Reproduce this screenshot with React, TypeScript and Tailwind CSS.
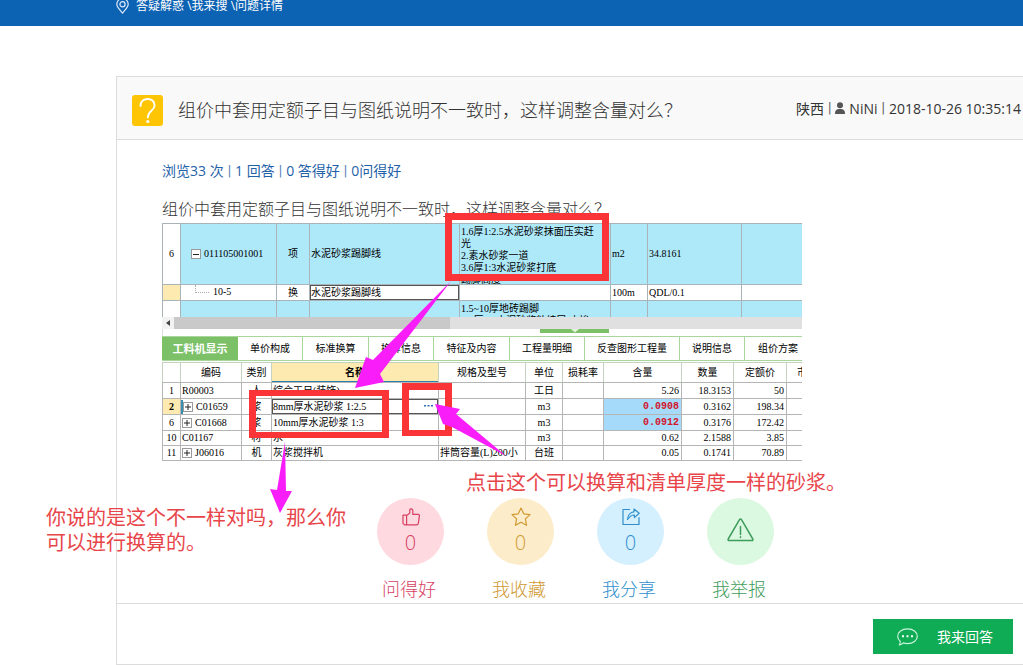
import clsx from "clsx";
import type { ReactNode } from "react";

const tabs = [
  { label: "单价构成", width: "w-[65px]" },
  { label: "标准换算", width: "w-[66px]" },
  { label: "换算信息", width: "w-[65px]" },
  { label: "特征及内容", width: "w-[76px]" },
  { label: "工程量明细", width: "w-[75px]" },
  { label: "反查图形工程量", width: "w-[95px]" },
  { label: "说明信息", width: "w-[65px]" },
];

interface Material {
  no: number;
  code: string;
  expandable?: boolean;
  kind: string;
  name: string;
  spec?: string;
  unit: string;
  content: string;
  amount: string;
  price: string;
  changed?: boolean;
  selected?: boolean;
}

const materials: Material[] = [
  { no: 1, code: "R00003", kind: "人", name: "综合工日(装饰)", unit: "工日", content: "5.26", amount: "18.3153", price: "50" },
  { no: 2, code: "C01659", expandable: true, kind: "浆", name: "8mm厚水泥砂浆 1:2.5", unit: "m3", content: "0.0908", amount: "0.3162", price: "198.34", changed: true, selected: true },
  { no: 6, code: "C01668", expandable: true, kind: "浆", name: "10mm厚水泥砂浆 1:3", unit: "m3", content: "0.0912", amount: "0.3176", price: "172.42", changed: true },
  { no: 10, code: "C01167", kind: "材", name: "水", unit: "m3", content: "0.62", amount: "2.1588", price: "3.85" },
  { no: 11, code: "J06016", expandable: true, kind: "机", name: "灰浆搅拌机", spec: "拌筒容量(L)200小", unit: "台班", content: "0.05", amount: "0.1741", price: "70.89" },
];

const stats = ["浏览33 次", "1 回答", "0 答得好", "0问得好"];

const Pipe = () => <span className="font-['Roboto',sans-serif] opacity-80">|</span>;

const TreeBox = ({ open = false }: { open?: boolean }) => (
  <svg viewBox="0 0 10 10" className="h-[10px] w-[10px] shrink-0" fill="none">
    <rect x="0.5" y="0.5" width="9" height="9" fill="#fff" stroke="#9a9a9a" />
    <path d={open ? "M2 5.5h6" : "M2 5h6M5 2v6"} stroke="#222" />
  </svg>
);

const BillTable = () => (
  <table className="w-full table-fixed border-separate border-spacing-0 [&_td]:border-l [&_td]:border-t [&_td]:border-[#a9b4b8] [&_td]:p-0">
    <colgroup>
      <col className="w-[18px]" />
      <col className="w-[96px]" />
      <col className="w-[33px]" />
      <col className="w-[150px]" />
      <col className="w-[151px]" />
      <col className="w-[37px]" />
      <col className="w-[94px]" />
      <col />
    </colgroup>
    <tbody>
      <tr className="h-[61px] bg-[#aee9fa]">
        <td className="bg-white text-center">6</td>
        <td>
          <div className="flex items-center gap-[3px] pl-[10px]">
            <TreeBox open />
            011105001001
          </div>
        </td>
        <td className="text-center">项</td>
        <td><div className="pl-px">水泥砂浆踢脚线</div></td>
        <td className="align-top">
          <div className="h-[60px] overflow-hidden pl-px pt-[2px] leading-[12px]">
            <p>1.6厚1:2.5水泥砂浆抹面压实赶</p>
            <p>光</p>
            <p>2.素水砂浆一道</p>
            <p>3.6厚1:3水泥砂浆打底</p>
            <p>踢脚高度</p>
          </div>
        </td>
        <td><div className="pl-px">m2</div></td>
        <td><div className="pl-px">34.8161</div></td>
        <td />
      </tr>
      <tr className="h-4 bg-white">
        <td className="bg-[#fdeab0]" />
        <td>
          <div className="flex h-[15px] pl-[14px]">
            <span className="h-2 w-[14px] border-b border-l border-dotted border-[#aaa]" />
            <span className="pl-1">10-5</span>
          </div>
        </td>
        <td className="text-center">换</td>
        <td><div className="h-[15px] border border-[#555] leading-[13px]">水泥砂浆踢脚线</div></td>
        <td />
        <td><div className="pl-px">100m</div></td>
        <td><div className="pl-px">QDL/0.1</div></td>
        <td />
      </tr>
      <tr className="h-[17px] bg-[#aee9fa]">
        <td className="bg-white" />
        <td />
        <td />
        <td />
        <td>
          <div className="h-4 overflow-hidden pl-px pt-[2px] leading-[12px]">
            <p>1.5~10厚地砖踢脚</p>
            <p>2.7厚1:2水泥砂浆粘结层(内掺</p>
          </div>
        </td>
        <td />
        <td />
        <td />
      </tr>
    </tbody>
  </table>
);

const MaterialTable = () => (
  <table className="w-full table-fixed border-separate border-spacing-0 border-b border-[#b5b5b5] [&_td]:border-l [&_td]:border-t [&_td]:border-[#b5b5b5] [&_td]:p-0 [&_th]:border-l [&_th]:border-t [&_th]:border-[#c4d3c0] [&_th]:p-0 [&_th]:font-normal">
    <colgroup>
      <col className="w-[18px]" />
      <col className="w-[61px]" />
      <col className="w-[30px]" />
      <col className="w-[167px]" />
      <col className="w-[87px]" />
      <col className="w-[37px]" />
      <col className="w-[41px]" />
      <col className="w-[78px]" />
      <col className="w-[52px]" />
      <col className="w-[53px]" />
      <col />
    </colgroup>
    <thead>
      <tr className="h-5">
        <th />
        <th>编码</th>
        <th>类别</th>
        <th className="bg-[#fdeab0]">
          <div className="h-[19px] border-b border-[#2f7fae] font-bold leading-[19px]">名称</div>
        </th>
        <th>规格及型号</th>
        <th>单位</th>
        <th>损耗率</th>
        <th>含量</th>
        <th>数量</th>
        <th>定额价</th>
        <th><div className="overflow-hidden whitespace-nowrap pl-[10px] text-left">市场价</div></th>
      </tr>
    </thead>
    <tbody>
      {materials.map((m, i) => (
        <tr key={m.no} className={i > 2 ? "h-[15px]" : "h-4"}>
          <td className={clsx("text-center", m.selected && "bg-[#fdeab0] font-bold")}>{m.no}</td>
          <td>
            <div className={clsx("flex items-center gap-[3px]", m.selected ? "border-l-2 border-[#3a8fb0]" : "pl-px", m.expandable && !m.selected && "pl-[2px]")}>
              {m.expandable && <TreeBox />}
              {m.code}
            </div>
          </td>
          <td className="text-center">{m.kind}</td>
          <td>
            <div className={clsx("flex justify-between whitespace-pre", m.selected ? "h-[15px] border border-[#555] leading-[13px]" : "pl-px")}>
              {m.name}
              {m.selected && (
                <svg viewBox="0 0 9 2" className="mr-1 mt-[5px] h-[2px] w-[9px]" fill="#2a6fb5">
                  <path d="M0 0h2v1.5H0zM3.5 0h2v1.5h-2zM7 0h2v1.5H7z" />
                </svg>
              )}
            </div>
          </td>
          <td><div className="overflow-hidden whitespace-nowrap pl-px">{m.spec}</div></td>
          <td className="text-center">{m.unit}</td>
          <td />
          <td className={clsx("text-right", m.changed && "bg-[#a5dafb]")}>
            <div className={clsx("pr-[2px]", m.changed && "font-['Liberation_Mono',monospace] font-bold text-[#d4152c]")}>{m.content}</div>
          </td>
          <td><div className="pr-[2px] text-right">{m.amount}</div></td>
          <td><div className="pr-[2px] text-right">{m.price}</div></td>
          <td />
        </tr>
      ))}
    </tbody>
  </table>
);

const Annotations = () => (
  <>
    <div className="absolute left-[283px] top-[-8px] h-[68px] w-[164px] border-[7px] border-[#fb3437]" />
    <div className="absolute left-[87px] top-[169px] h-12 w-[140px] border-[7px] border-y-[6px] border-[#fb3437]" />
    <div className="absolute left-[240px] top-[162px] h-[53px] w-[50px] border-[7px] border-b-[6px] border-[#fb3437]" />
    <svg viewBox="0 0 640 300" className="pointer-events-none absolute left-0 top-0 h-[300px] w-[640px]" fill="#f91df9">
      <path d="M289 60L218 153L222 161L193 167L204 136L211 139Z" />
      <path d="M344 235L290 206L281 203L273 183L298 188L294 193Z" />
      <path d="M123 221L124 270L130 270L118 292L108 268L115 269Z" />
    </svg>
    <p className="absolute left-[304px] top-[249px] whitespace-nowrap text-[20px] font-normal leading-[25px] text-[#e8454a]">
      点击这个可以换算和清单厚度一样的砂浆。
    </p>
    <p className="absolute left-[-116px] top-[284px] w-[302px] text-[20px] font-normal leading-[25px] text-[#e8454a]">
      你说的是这个不一样对吗，那么你可以进行换算的。
    </p>
  </>
);

const Estimate = () => (
  <div className="relative w-full max-w-[640px]">
    <div className="overflow-hidden pt-[2px] font-['Liberation_Serif','Noto_Sans_CJK_SC',serif] text-[10px] font-normal leading-[14px] text-black">
      <BillTable />
      <div className="flex h-3 bg-[#e0e0e0]">
        <span className="flex w-3 items-center justify-center bg-[#f2f2f2]">
          <svg viewBox="0 0 4 6" className="h-[6px] w-1" fill="#444"><path d="M4 0v6L0 3z" /></svg>
        </span>
        <span className="w-[276px] bg-[#c9c9c9]" />
      </div>
      <div className="h-[7px] border-l border-[#ddd]">
        <div className="ml-[377px] flex h-1 w-[69px] justify-center bg-[#7cc068]">
          <svg viewBox="0 0 8 4" className="h-1 w-2" fill="#e4f5de"><path d="M0 0h8L4 3.5z" /></svg>
        </div>
      </div>
      <div className="flex h-[25px] whitespace-nowrap border-y border-[#a9d69b]">
        <button className="w-[76px] shrink-0 bg-[#7cc068] text-[11px] font-bold text-white">工料机显示</button>
        {tabs.map((t) => (
          <button key={t.label} className={clsx("shrink-0 border-r border-[#a9d69b]", t.width)}>{t.label}</button>
        ))}
        <button className="shrink-0 pl-[13px]">组价方案</button>
      </div>
      <div className="pt-px">
        <MaterialTable />
      </div>
    </div>
    <Annotations />
  </div>
);

const ThumbIcon = () => (
  <svg viewBox="0 0 18 18" className="h-[18px] w-[18px]" fill="none" stroke="currentColor" strokeWidth="1.2" strokeLinejoin="round" strokeLinecap="round">
    <path d="M1 7.2h3.6v9.6H2.4L1 15.4zM4.6 7.6L7.8 5V1.6C7.8.6 10.6.4 10.8 2.4v4h5.4c.9 0 1.3.7 1.2 1.5l-1 7.2c-.2 1.1-.8 1.7-1.9 1.7H4.6" />
  </svg>
);

const StarIcon = () => (
  <svg viewBox="0 0 20 20" className="h-5 w-5" fill="none" stroke="currentColor" strokeWidth="1.2" strokeLinejoin="round">
    <path d="M10 1l2.7 5.8 6.3.8-4.6 4.3 1.2 6.4-5.6-3.1-5.6 3.1 1.2-6.4L1 7.6l6.3-.8z" />
  </svg>
);

const ShareIcon = () => (
  <svg viewBox="0 0 18 18" className="h-[18px] w-[18px]" fill="none" stroke="currentColor" strokeWidth="1.2" strokeLinejoin="round" strokeLinecap="round">
    <path d="M7.5 1.5H1v15h16v-7" />
    <path d="M5.5 11.5C5.8 7 8.5 4 12 3.8V1l5.2 4.2-4.8 4.4V7C9.5 7 7.5 8.5 5.5 11.5z" />
  </svg>
);

const WarnIcon = () => (
  <svg viewBox="0 0 27 24" className="h-6 w-[27px]" fill="none" stroke="currentColor" strokeWidth="1.5" strokeLinejoin="round" strokeLinecap="round">
    <path d="M12.5 1.6c.5-.8 1.5-.8 2 0l11.3 19.4c.4.8 0 1.6-.9 1.6H2.1c-.9 0-1.3-.8-.9-1.6zM13.5 8.5v8M13.5 18.8v.6" />
  </svg>
);

interface ActionProps {
  label: string;
  count?: number;
  icon: ReactNode;
  circle: string;
  color: string;
}

const actions: ActionProps[] = [
  { label: "问得好", count: 0, icon: <ThumbIcon />, circle: "bg-[#ffd9e0]", color: "text-[#d63f62]" },
  { label: "我收藏", count: 0, icon: <StarIcon />, circle: "bg-[#fdecca]", color: "text-[#cf9a32]" },
  { label: "我分享", count: 0, icon: <ShareIcon />, circle: "bg-[#d4effe]", color: "text-[#2f8fce]" },
  { label: "我举报", icon: <WarnIcon />, circle: "bg-[#dbf8e1]", color: "text-[#3f9d5c]" },
];

const Action = ({ label, count, icon, circle, color }: ActionProps) => (
  <button className={clsx("flex w-[67px] flex-col items-center gap-3", color)}>
    <span className={clsx("flex h-[67px] w-[67px] flex-col items-center rounded-full", circle, count === undefined ? "justify-center pb-1" : "pt-[9px]")}>
      <span className="flex h-5 items-center">{icon}</span>
      {count !== undefined && <span className="text-[20px] leading-8">{count}</span>}
    </span>
    <span className="pr-[3px] text-[18px] leading-6">{label}</span>
  </button>
);

export default function App() {
  return (
    <div className="overflow-x-hidden bg-white font-['Open_Sans','Noto_Sans_CJK_SC',sans-serif] font-light text-[#333]">
      <nav className="flex h-[26px] items-start gap-[7px] bg-[#0c62b3] pl-[116px] text-[12px] font-normal leading-[12px] text-white">
        <svg viewBox="0 0 13 16" className="-mt-[2px] h-4 w-[13px]" fill="none" stroke="#dceafa" strokeWidth="1.2">
          <path d="M6.5 15C3.5 11.5.8 9 .8 6.2a5.7 5.7 0 0 1 11.4 0C12.2 9 9.5 11.5 6.5 15z" />
          <circle cx="6.5" cy="6.2" r="2.6" />
        </svg>
        <span className="whitespace-pre">
          <a href="#qa">答疑解惑</a> \<a href="#search">我来搜</a> \<a href="#detail">问题详情</a>
        </span>
      </nav>

      <main className="ml-[116px] mt-[50px] border-y border-l border-[#dcdcdc]">
        <header className="flex h-[63px] items-center gap-[15px] whitespace-nowrap border-b border-[#dcdcdc] bg-[#f9f9f9] pl-[15px] pt-[4px]">
          <svg viewBox="0 0 31 31" className="h-[31px] w-[31px] shrink-0" fill="none">
            <rect width="31" height="31" rx="3" fill="#fec505" />
            <path d="M8.5 11C8.5 1.8 22.6 1.8 22.6 10.4c0 5-6.8 5.6-6.8 12" stroke="#fff" strokeWidth="1.9" strokeLinecap="round" />
            <circle cx="15.8" cy="26.5" r="1.6" fill="#fff" />
          </svg>
          <h1 className="text-[18px]">组价中套用定额子目与图纸说明不一致时，这样调整含量对么？</h1>
          <div className="ml-auto flex shrink-0 items-center gap-1 pb-1 pr-[2px] text-[14px] font-normal">
            <span>陕西</span>
            <Pipe />
            <svg viewBox="0 0 10 12" className="h-3 w-[10px]" fill="#555">
              <circle cx="5" cy="3.2" r="3" />
              <path d="M0 12c0-3.8 1.6-5 5-5s5 1.2 5 5z" />
            </svg>
            <span>NiNi</span>
            <Pipe />
            <time>2018-10-26 10:35:14</time>
          </div>
        </header>

        <section className="pb-[2px] pl-[45px] pt-[21px]">
          <p className="flex gap-1 text-[14px] font-normal leading-5 text-[#1f62a8]">
            {stats.map((s, i) => (
              <span key={s} className="flex gap-1">
                {i > 0 && <Pipe />}
                {s}
              </span>
            ))}
          </p>
          <h2 className="mt-4 text-[16px] leading-6">组价中套用定额子目与图纸说明不一致时，这样调整含量对么？</h2>
          <Estimate />
          <div className="ml-[215px] mt-[37px] flex gap-[43px]">
            {actions.map((a) => (
              <Action key={a.label} {...a} />
            ))}
          </div>
        </section>

        <footer className="flex h-[61px] items-center justify-end border-t border-[#dcdcdc] pr-[10px] pt-[5px]">
          <button className="flex h-[35px] w-[140px] items-center gap-[19px] bg-[#0fab55] pl-6 text-[14px] font-normal text-white">
            <svg viewBox="0 0 21 18" className="h-[18px] w-[21px]" fill="none" stroke="#c9f3da" strokeWidth="1.2" strokeLinejoin="round">
              <path d="M10.5.8c5.6 0 9.8 3.2 9.8 7.4s-4.2 7.4-9.8 7.4c-1.6 0-3-.2-4.2-.7-1 1-2.3 1.8-4 2.1.8-1.2 1.1-2.3.9-3.7C1.6 12 .7 10.2.7 8.2.7 4 4.9.8 10.5.8z" />
              <path d="M5 7.2h2v2H5zM9.5 7.2h2v2h-2zM14 7.2h2v2h-2z" fill="#fff" stroke="none" />
            </svg>
            我来回答
          </button>
        </footer>
      </main>
    </div>
  );
}
